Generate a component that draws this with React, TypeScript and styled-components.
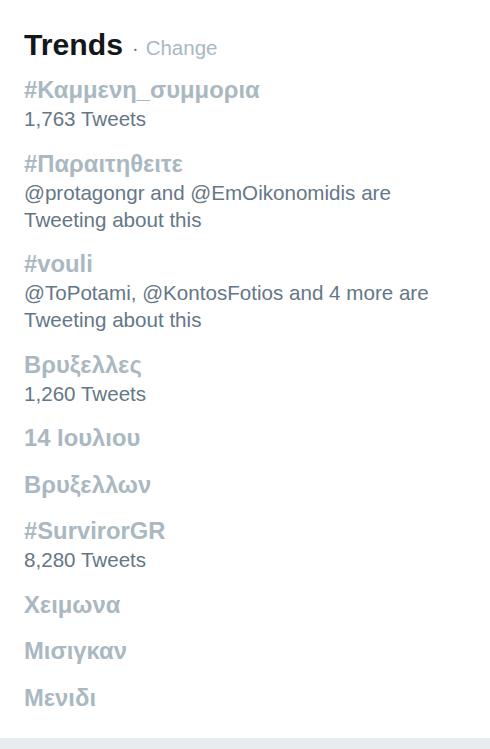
import React from 'react'
import styled, { createGlobalStyle } from 'styled-components'

const GlobalStyle = createGlobalStyle`
  html, body {
    margin: 0;
    padding: 0;
    background: #e6ecf0;
  }
  body {
    font-family: 'Liberation Sans', Arial, sans-serif;
  }
`

const Page = styled.div`
  min-height: 100vh;
  background: #e6ecf0;
`

const Card = styled.div`
  background: #ffffff;
  padding: 27px 24px 25px 24px;
`

const Header = styled.div`
  display: flex;
  align-items: baseline;
  height: 36px;
  line-height: 36px;
  margin-bottom: 12px;
`

const Title = styled.h3`
  margin: 0;
  font-size: 30.2px;
  font-weight: bold;
  color: #14171a;
`

const Dot = styled.span`
  margin: 0 7px 0 9px;
  font-size: 20px;
  color: #657786;
`

const ChangeLink = styled.a`
  font-size: 20.5px;
  color: #aab8c2;
  text-decoration: none;
  cursor: pointer;
`

const List = styled.ul`
  list-style: none;
  margin: 0;
  padding: 0;
  display: flex;
  flex-direction: column;
  gap: 16.5px;
`

const Item = styled.li`
  display: flex;
  flex-direction: column;
`

const Name = styled.span`
  font-size: 23.8px;
  font-weight: bold;
  line-height: 30px;
  color: #aab8c2;
  white-space: nowrap;
`

const Meta = styled.span`
  font-size: 20.6px;
  line-height: 27px;
  color: #657786;
  white-space: nowrap;
`

type Trend = { name: string; meta?: string[] }

const trends: Trend[] = [
  { name: '#Καμμενη_συμμορια', meta: ['1,763 Tweets'] },
  { name: '#Παραιτηθειτε', meta: ['@protagongr and @EmOikonomidis are', 'Tweeting about this'] },
  { name: '#vouli', meta: ['@ToPotami, @KontosFotios and 4 more are', 'Tweeting about this'] },
  { name: 'Βρυξελλες', meta: ['1,260 Tweets'] },
  { name: '14 Ιουλιου' },
  { name: 'Βρυξελλων' },
  { name: '#SurvirorGR', meta: ['8,280 Tweets'] },
  { name: 'Χειμωνα' },
  { name: 'Μισιγκαν' },
  { name: 'Μενιδι' },
]

const App = () => {
  return (
    <Page>
      <GlobalStyle />
      <Card>
        <Header>
          <Title>Trends</Title>
          <Dot>·</Dot>
          <ChangeLink>Change</ChangeLink>
        </Header>
        <List>
          {trends.map((trend) => (
            <Item key={trend.name}>
              <Name>{trend.name}</Name>
              {trend.meta && trend.meta.map((line) => <Meta key={line}>{line}</Meta>)}
            </Item>
          ))}
        </List>
      </Card>
    </Page>
  )
}

export default App
